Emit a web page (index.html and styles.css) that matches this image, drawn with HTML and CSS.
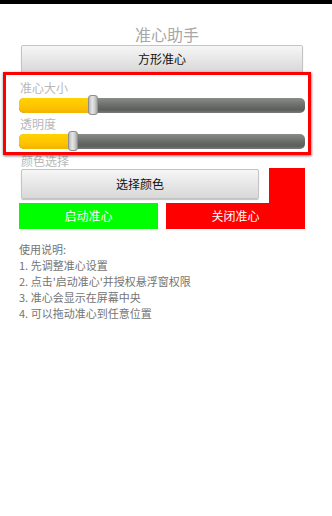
FILE: index.html
```html
<!DOCTYPE html>
<html>
<head>
<meta charset="utf-8">
<link rel="stylesheet" href="styles.css">
</head>
<body>
<div class="statusbar"></div>
<div class="title">准心助手</div>
<div class="btn btn-shape">方形准心</div>
<div class="panel">
  <div class="label">准心大小</div>
  <div class="track"><div class="fill" style="width:74px"></div><div class="thumb" style="left:69px"></div></div>
  <div class="label label2">透明度</div>
  <div class="track"><div class="fill" style="width:54px"></div><div class="thumb" style="left:49px"></div></div>
</div>
<div class="label label3">颜色选择</div>
<div class="color-row">
  <div class="btn btn-color">选择颜色</div>
  <div class="swatch"></div>
</div>
<div class="action-row">
  <div class="action start">启动准心</div>
  <div class="action stop">关闭准心</div>
</div>
<div class="help">
  <div>使用说明:</div>
  <div>1. 先调整准心设置</div>
  <div>2. 点击'启动准心'并授权悬浮窗权限</div>
  <div>3. 准心会显示在屏幕中央</div>
  <div>4. 可以拖动准心到任意位置</div>
</div>
</body>
</html>
```

FILE: styles.css
```css
html, body {
  margin: 0;
  padding: 0;
  background: #ffffff;
  font-family: "Noto Sans CJK SC", "Noto Sans", sans-serif;
  width: 332px;
  height: 516px;
  overflow: hidden;
}
.statusbar {
  height: 4px;
  background: #000;
}
.title {
  margin-top: 20px;
  height: 20px;
  line-height: 20px;
  text-align: center;
  font-size: 16px;
  color: #a8a8a8;
  padding-left: 2px;
}
.btn {
  box-sizing: border-box;
  border: 1px solid #c4c4c4;
  border-radius: 2px;
  background: linear-gradient(#f6f6f6, #d8d8d8);
  box-shadow: 0 1px 1px rgba(0,0,0,0.25);
  color: #111;
  font-size: 12px;
  text-align: center;
}
.btn-shape {
  margin: 1px 29px 0 21px;
  height: 28px;
  line-height: 26px;
}
.panel {
  position: relative;
  z-index: 1;
  box-sizing: border-box;
  margin: -1px 21px 0 3px;
  height: 83px;
  border: 3px solid #ff0000;
  box-shadow: 0 1px 3px rgba(0,0,0,0.35), 1px 1px 2px rgba(0,0,0,0.25);
  padding: 5px 3px 0 13px;
}
.label {
  font-size: 12px;
  line-height: 16px;
  color: #b8b8b8;
  padding-left: 1px;
}
.label2 {
  margin-top: 3px;
}
.label3 {
  margin: -1px 0 0 20px;
  line-height: 13px;
}
.track {
  position: relative;
  height: 15px;
  margin-top: 2px;
  border-radius: 5px;
  background: linear-gradient(#8a8c89, #6b6d6a 50%, #5c5e5b 80%, #7a7c79);
}
.fill {
  height: 15px;
  border-radius: 5px 0 0 5px;
  background: linear-gradient(#ffd200, #ffc400 60%, #f2b400);
}
.thumb {
  position: absolute;
  top: -3px;
  width: 10px;
  height: 20px;
  box-sizing: border-box;
  border: 1px solid #8e8e8e;
  border-radius: 3px;
  background: linear-gradient(90deg, #b8b8b8, #e6e6e6 40%, #d0d0d0 70%, #a8a8a8);
}
.color-row {
  display: flex;
  align-items: flex-start;
  margin: 1px 27px 0 21px;
}
.btn-color {
  width: 238px;
  height: 30px;
  line-height: 28px;
  margin-top: 1px;
}
.swatch {
  margin-left: 10px;
  width: 36px;
  height: 35px;
  background: #ff0000;
}
.action-row {
  display: flex;
  gap: 8px;
  margin: 0 27px 0 19px;
}
.action {
  flex: 1;
  height: 26px;
  line-height: 26px;
  text-align: center;
  font-size: 12px;
  color: #ffffff;
}
.start {
  background: #00ff00;
}
.stop {
  background: #ff0000;
}
.help {
  margin: 12px 0 0 19px;
  font-size: 11px;
  line-height: 16px;
  color: #747474;
}
```
